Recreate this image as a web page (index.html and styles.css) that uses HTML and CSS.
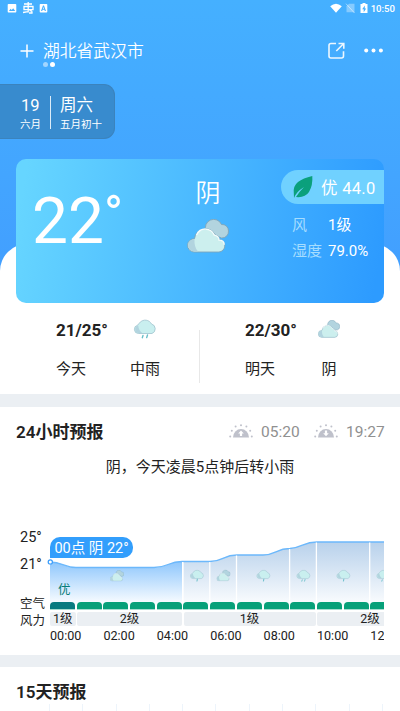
FILE: index.html
```html
<!DOCTYPE html>
<html lang="zh-CN">
<head>
<meta charset="utf-8">
<title>天气</title>
<link rel="stylesheet" href="styles.css">
</head>
<body>
<svg class="defs" width="0" height="0">
  <defs>
    <symbol id="cloudy" viewBox="0 0 42 34">
      <path d="M19 12A8.300 8.300 0 0 1 34.500 5.500a6.300 6.300 0 0 1 7 6.500 6.500 6.500 0 0 1-7 7z" fill="#b2d4df" stroke="#7fa5b9" stroke-width=".9"/>
      <path d="M7 33a6.500 6.500 0 0 1 .5-13.300A11 11 0 0 1 28 15.500a7 7 0 0 1 4.500 5 6.300 6.300 0 0 1-.5 12.500z" fill="#ccefee" stroke="#7fa5b9" stroke-width=".9"/>
      <path d="M11 32.500H7a6 6 0 0 1 .5-12.300q-.5 8 3.500 12.300z" fill="#b2d4df"/>
      <path d="M9.500 16C13 8 24 8 27.300 16.200 31 17 32 19 32 21.200q5 0 5.300 4.500" fill="none" stroke="#f4fcfc" stroke-width="1.300"/>
    </symbol>
    <symbol id="cloud" viewBox="0 0 24 20">
      <path d="M5.500 14.500a4.200 4.200 0 0 1-.8-8.300A6 6 0 0 1 7 3.500a7 7 0 0 1 11.500 1.500 5 5 0 0 1 .5 9.500z" fill="#c9efef" stroke="#9fc3ce" stroke-width=".8"/>
      <path d="M5.500 14a3.800 3.800 0 0 1-.3-7.500q.5 5 4 7.500z" fill="#b2d4df"/>
    </symbol>
    <symbol id="rain1" viewBox="0 0 24 20">
      <use href="#cloud" width="24" height="20"/>
      <path d="M12.500 15.500l-.5 3" stroke="#58b9c2" stroke-width="1.400" stroke-linecap="round"/>
    </symbol>
    <symbol id="rain2" viewBox="0 0 24 20">
      <use href="#cloud" width="24" height="20"/>
      <path d="M10 16.500l-.7 2.200M14.500 16l-.8 2.600" stroke="#68bfc8" stroke-width="1.400" stroke-linecap="round"/>
    </symbol>
    <symbol id="sun" viewBox="0 0 24 15">
      <path d="M4 13.500a8 8.500 0 0 1 16 0z"/>
      <circle cx="1.200" cy="12.500" r="1"/><circle cx="2.800" cy="6.800" r="1"/>
      <circle cx="6.600" cy="2.600" r="1"/><circle cx="12" cy="1.300" r="1"/>
      <circle cx="17.400" cy="2.600" r="1"/><circle cx="21.200" cy="6.800" r="1"/>
      <circle cx="22.800" cy="12.500" r="1"/>
    </symbol>
  </defs>
</svg>

<main class="screen">
  <header class="hero">
    <div class="status">
      <svg width="44" height="14" viewBox="0 0 44 14">
        <path fill="#fff" fill-rule="evenodd" d="M1.500 4h7q.8 0 .8.800v7q0 .7-.8.700h-7q-.8 0-.8-.7v-7q0-.8.8-.8zM2 11h6.200L6.200 8.200 4.700 10 3.600 8.800z"/>
        <g fill="none" stroke="#fff" stroke-width="1.300">
          <path d="M17 4h8M17 6.500h9v3.200h-9zM21.200 2v10.500M16 12.500l5-.8M22.500 10.500q3 0 2.500 2.500h-3"/>
        </g>
        <path fill="#fff" fill-rule="evenodd" d="M33.500 4h6q.8 0 .8.800v7q0 .7-.8.700h-6q-.8 0-.8-.7v-7q0-.8.800-.8zM36 5.500L34 11h1.200l.4-1.200h1.800l.4 1.200H39l-2-5.500zm.5 1.500l.6 1.800h-1.200z"/>
      </svg>
      <div class="status-right">
        <svg width="40" height="14" viewBox="0 0 40 14">
          <path fill="#fff" d="M.2 4.200Q6 -.8 11.800 4.200L6 10.700z"/>
          <path fill="#fff" opacity=".35" d="M19 1.700h5.500V10.200h-8V4.200z"/>
          <path stroke="#fff" opacity=".5" d="M16 1.700l8.500 9.300"/>
          <path fill="#fff" fill-rule="evenodd" d="M32.500 1h3v1h2v9h-7V2h2zM34.800 3.500l-2.600 3.700h1.500v3l2.500-3.700h-1.400z"/>
        </svg>
        <span class="clock">10:50</span>
      </div>
    </div>
    <div class="topbar">
      <svg width="14" height="14" viewBox="0 0 14 14"><path d="M7 .5v13M.5 7h13" stroke="#fff" stroke-width="1.500"/></svg>
      <div class="city">湖北省武汉市<span class="pager"><i></i><i class="on"></i></span></div>
      <svg class="share" width="18" height="18" viewBox="0 0 18 18" fill="none" stroke="#fff" stroke-opacity=".9" stroke-width="1.600">
        <path d="M8 1.500H3Q1 1.500 1 3.500v10.500q0 2 2 2h10.500q2 0 2-2V9.200M8.300 9L15.500 1.700M10.500 1.500h5.300v5.300"/>
      </svg>
      <svg width="20" height="6" viewBox="0 0 20 6" fill="#fff"><circle cx="2.200" cy="2.600" r="2"/><circle cx="9.500" cy="2.600" r="2"/><circle cx="16.900" cy="2.600" r="2"/></svg>
    </div>
    <div class="date">
      <div class="date-cell solar"><b>19</b><small>六月</small></div>
      <div class="date-cell lunar"><b>周六</b><small>五月初十</small></div>
    </div>
  </header>

  <section class="sheet">
    <div class="now">
      <div class="temp">22<sup>°</sup></div>
      <div class="cond">
        <span>阴</span>
        <svg width="43" height="34" viewBox="0 0 43 34"><use href="#cloudy" width="42" height="34"/></svg>
      </div>
      <div class="facts">
        <div class="aqi">
          <svg width="20" height="24" viewBox="0 0 20 24">
            <path fill="#0ba07c" d="M19.300 1Q10 3 5 7 0 11 .8 18l.2 5Q3 17 11 12 6 17 3 22q9 1 13-5 4-7 3.300-16z"/>
          </svg>
          <span>优 44.0</span>
        </div>
        <div class="fact"><em>风</em><span>1级</span></div>
        <div class="fact"><em>湿度</em><span>79.0%</span></div>
      </div>
    </div>
    <div class="days">
      <div class="day today">
        <strong>21/25°</strong><svg width="24" height="20"><use href="#rain2"/></svg>
        <span>今天</span><span>中雨</span>
      </div>
      <div class="day tomorrow">
        <strong>22/30°</strong><svg width="22" height="18"><use href="#cloudy"/></svg>
        <span>明天</span><span>阴</span>
      </div>
    </div>
  </section>

  <section class="panel hourly">
    <div class="panel-head">
      <h2>24小时预报</h2>
      <svg width="24" height="15" fill="#bfc1cb"><use href="#sun"/><path fill="#fff" d="M12 6.500l2.800 3h-1.700V12h-2.200V9.500H9.200z"/></svg>
      <time>05:20</time>
      <svg width="24" height="15" fill="#bfc1cb"><use href="#sun"/><path fill="#fff" d="M12 12.200l2.800-3h-1.700V6.500h-2.200v2.700H9.200z"/></svg>
      <time>19:27</time>
    </div>
    <p class="summary">阴，今天凌晨5点钟后转小雨</p>
    <div class="chart">
      <div class="axis">
        <span class="hi">25°</span><span class="lo">21°</span><span class="air-label">空气</span><span class="wind-label">风力</span>
      </div>
      <div class="plot">
        <svg class="area" width="337" height="76" viewBox="-3 0 337 76">
          <defs>
            <linearGradient id="g1" gradientUnits="userSpaceOnUse" x1="0" y1="32" x2="0" y2="74"><stop stop-color="#8fc7fc"/><stop offset="1" stop-color="#fbfdff"/></linearGradient>
            <linearGradient id="g2" gradientUnits="userSpaceOnUse" x1="0" y1="12" x2="0" y2="74"><stop stop-color="#b8d1eb"/><stop offset="1" stop-color="#fafcfe"/></linearGradient>
            <clipPath id="past"><path d="M0 0h132v82H0z"/></clipPath>
            <clipPath id="next"><path d="M133.500 0h202v82h-202z"/></clipPath>
          </defs>
          <path clip-path="url(#past)" fill="url(#g1)" d="M0 32C12 32 15 37.500 26 37.500H104C118 37.500 118 31.500 132 31.500V76H0z"/>
          <path clip-path="url(#next)" fill="url(#g2)" d="M132 31.500H160C173 31.500 173 25 187 25H213C226 25 226 18.500 240 18.500 253 17.500 253 12 267 12H334V76H132z"/>
          <path fill="none" stroke="#6cb8fb" stroke-width="1.300" d="M0 32C12 32 15 37.500 26 37.500H104C118 37.500 118 31.500 132 31.500H160C173 31.500 173 25 187 25H213C226 25 226 18.500 240 18.500 253 17.500 253 12 267 12H334"/>
          <path stroke="#fff" stroke-width="1.300" d="M132.700 32V76M159.800 32V76M186.500 25.500V76M239.600 19V76M266.400 12.500V76M319.700 12.500V76"/>
          <circle cx=".3" cy="31.900" r="2.100" fill="#fff" stroke="#3a9dfb" stroke-width="1.200"/>
          <use href="#cloudy" x="60" y="40" width="14" height="11.500"/>
          <use href="#rain1" x="139.500" y="39.500" width="15" height="12.500"/>
          <use href="#cloudy" x="166.500" y="39.500" width="14" height="12"/>
          <use href="#rain1" x="206" y="39.500" width="15" height="12.500"/>
          <use href="#rain2" x="246" y="39.500" width="15" height="12.500"/>
          <use href="#rain1" x="286" y="39.500" width="15" height="12.500"/>
          <use href="#rain2" x="326" y="39.500" width="15" height="12.500"/>
        </svg>
        <span class="bubble">00点 阴 22°</span>
        <span class="grade">优</span>
        <div class="air"><i class="now-air"></i><i></i><i></i><i></i><i></i><i></i><i></i><i></i><i></i><i></i><i></i><i></i><i></i></div>
        <div class="wind"><span>1级</span><span>2级</span><span>1级</span><span>2级</span></div>
        <div class="hours"><span>00:00</span><span>02:00</span><span>04:00</span><span>06:00</span><span>08:00</span><span>10:00</span><span>12</span></div>
      </div>
    </div>
  </section>

  <section class="panel daily">
    <h2>15天预报</h2>
    <div class="ticks"><i></i><i></i><i></i><i></i><i></i><i></i><i></i><i></i><i></i><i></i><i></i></div>
  </section>
</main>
</body>
</html>
```
FILE: styles.css
```css
* { box-sizing: border-box; }
body {
  margin: 0;
  background: #ebeff3;
  color: #222;
  font-family: Roboto, "Noto Sans CJK SC", sans-serif;
}
svg { display: block; flex: none; }
i, em { font-style: normal; }
.defs { position: absolute; }
.screen { width: 400px; height: 711px; overflow: hidden; }

/* Header */
.hero {
  height: 271px;
  background: linear-gradient(#45b0ff, #429fff);
  color: #fff;
}
.status {
  display: flex;
  justify-content: space-between;
  height: 17px;
  padding: 0 5px 0 7px;
}
.status-right { display: flex; gap: 1px; }
.clock { font-size: 9.600px; font-weight: 500; line-height: 17px; }
.status-right svg { margin-top: 2px; }
.topbar {
  display: flex;
  align-items: center;
  height: 67px;
  padding: 0 16px 0 20px;
}
.city {
  position: relative;
  margin-left: 9px;
  font-size: 16.800px;
  font-weight: 350;
  line-height: 24px;
}
.pager {
  position: absolute;
  left: 0;
  top: 23px;
  display: flex;
  gap: 2px;
}
.pager i { width: 5px; height: 5px; border-radius: 50%; background: #a2d5ff; }
.pager .on { background: #fff; }
.share { margin: 0 18px 0 auto; }
.date {
  display: flex;
  width: 115px;
  height: 55px;
  padding: 9px 0 0 20px;
  border-radius: 0 11px 11px 0;
  background: #388bce;
  border: 1px solid #3b83bd;
  border-left: 0;
}
.date-cell { display: flex; flex-direction: column; }
.date-cell b { font-size: 16.500px; font-weight: 400; line-height: 24px; }
.date-cell small { font-size: 10.500px; line-height: 14px; white-space: nowrap; }
.solar { width: 31px; height: 33px; margin-top: 2px; border-right: 1px solid #dcecf8; }
.solar b { padding-left: 1px; line-height: 20px; }
.solar small { margin-top: 2px; }
.lunar { padding-left: 9px; }

/* Current conditions */
.sheet {
  height: 150px;
  margin-top: -27px;
  padding: 0 16px;
  border-radius: 27px 27px 0 0;
  background: #fff;
}
.sheet::before { content: ""; display: table; }
.now {
  display: flex;
  height: 144px;
  margin-top: -85px;
  border-radius: 10px;
  background: linear-gradient(100deg, #66d5ff 3%, #2d9bff 97%);
  color: #fff;
}
.temp {
  width: 168px;
  padding: 25px 0 0 16px;
  font-size: 64px;
  font-weight: 400;
  line-height: 75px;
  white-space: nowrap;
}
.temp sup {
  display: inline-block;
  font-size: 51px;
  font-weight: 400;
  line-height: 40px;
  vertical-align: 11px;
}
.cond { width: 48px; padding-top: 16px; text-align: center; font-size: 25px; font-weight: 350; line-height: 38px; }
.cond span { display: block; }
.cond svg { margin: 6px 0 0 3px; }
.facts { display: flex; flex-direction: column; width: 152px; }
.aqi {
  display: flex;
  align-items: center;
  width: 103px;
  height: 34px;
  margin: 11px 0 8px auto;
  padding-left: 12px;
  border-radius: 17px 0 0 17px;
  background: #70d1ff;
  font-size: 16.500px;
  letter-spacing: .3px;
}
.aqi span { margin-left: 8px; }
.fact { display: flex; height: 26px; padding-left: 60px; font-size: 15px; line-height: 26px; }
.fact em { width: 36px; color: #a6ddff; }

/* Today and tomorrow */
.days { display: flex; height: 91px; padding-top: 11px; }
.day {
  display: grid;
  grid-template-rows: 32px 42px;
  align-items: center;
  justify-items: center;
  font-size: 15px;
}
.day svg { margin-top: -2px; }
.day strong, .day strong + svg + span { justify-self: start; }
.day strong { font-size: 17px; font-weight: 700; }
.today { width: 184px; grid-template-columns: 73px 32px; padding-left: 40px; background: linear-gradient(#e8e8e8, #e8e8e8) right 16px / 1px 53px no-repeat; }
.tomorrow { grid-template-columns: 68px 32px; padding-left: 45px; }

/* Panels */
.panel { background: #fff; }
h2 { margin: 0; font-size: 17px; font-weight: 600; line-height: 24px; }
.hourly { height: 248px; margin-top: 13px; padding: 13px 16px 0; }
.panel-head { display: flex; align-items: center; height: 24px; }
.panel-head h2 { flex: none; width: 213px; }
.panel-head svg { margin-top: -2px; }
time { flex: none; width: 38px; margin: 0 15px 0 8px; color: #909090; font-size: 15.500px; line-height: 24px; }
time:last-child { margin-right: 0; }
.summary { margin: 11px 0 0; font-size: 15px; line-height: 24px; text-align: center; }
.chart { display: flex; margin-top: 51px; }
.axis { display: flex; flex-direction: column; width: 34px; padding-left: 4px; white-space: nowrap; font-size: 14.500px; line-height: 18px; }
.hi { margin-top: -1px; }
.lo { margin-top: 9px; }
.air-label { margin-top: 21px; font-size: 12.500px; line-height: 18px; }
.wind-label { font-size: 12.500px; line-height: 16px; }
.plot { position: relative; width: 334px; height: 120px; }
.area { margin: 0 0 -4px -3px; }
.air, .wind, .hours { display: flex; overflow-x: clip; position: relative; }
.bubble {
  position: absolute;
  left: 0;
  top: 7px;
  width: 83px;
  height: 21px;
  border-radius: 10px 10px 10px 0;
  background: #329efc;
  color: #fff;
  font-size: 14.500px;
  line-height: 23px;
  text-align: center;
  white-space: nowrap;
}
.grade { position: absolute; left: 8px; top: 50px; color: #087d78; font-size: 12.500px; line-height: 20px; }
.air { gap: 1.700px; }
.air i { flex: none; width: 25px; height: 8px; border-radius: 4px 4px 0 0; background: #07a079; border-bottom: 1px solid #a6dccf; }
.air .now-air { background: #087b80; }
.wind { gap: 1.500px; margin-top: 2px; }
.wind span { flex: none; height: 14px; border-radius: 2px; background: #ebeff3; font-size: 12.500px; line-height: 13px; text-align: center; }
.wind span:nth-child(1) { width: 25.500px; }
.wind span:nth-child(2) { width: 105px; }
.wind span:nth-child(3) { width: 132px; }
.wind span:nth-child(4) { width: 106px; }
.hours { font-size: 12.600px; line-height: 20px; }
.hours span { flex: none; width: 53.400px; }
.daily { height: 50px; margin-top: 12px; padding: 13px 16px 0; }
.ticks { display: flex; gap: 32.300px; margin: 0 0 0 33px; }
.ticks i { flex: none; width: 1px; height: 10px; background: #edf4fb; }
```
